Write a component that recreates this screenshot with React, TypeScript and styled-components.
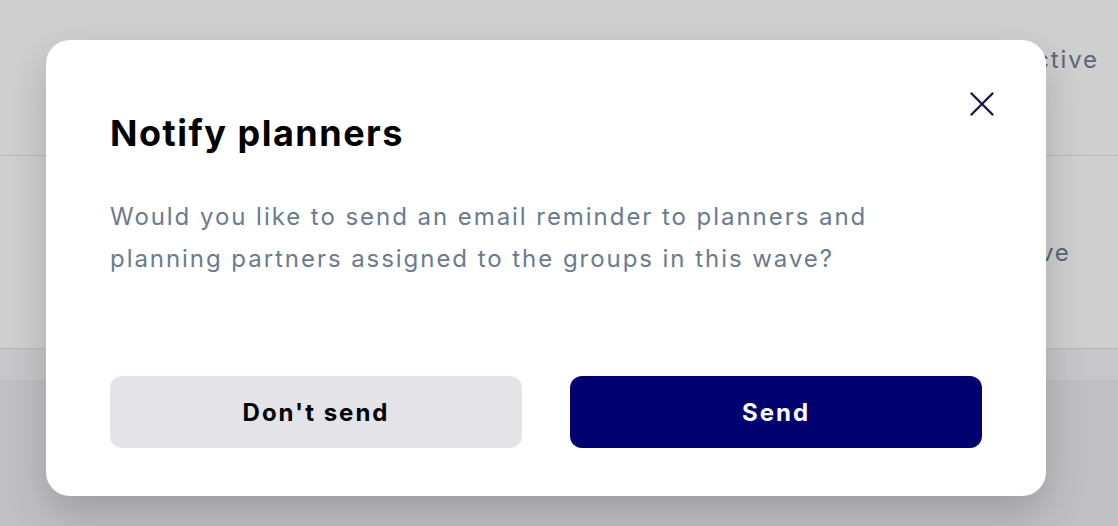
import React from "react";
import styled, { createGlobalStyle } from "styled-components";

const GlobalStyle = createGlobalStyle`
  html, body {
    margin: 0;
    padding: 0;
    width: 1118px;
    height: 526px;
    overflow: hidden;
    font-family: Inter, "Noto Sans", sans-serif;
  }
`;

const Page = styled.div`
  position: relative;
  width: 1118px;
  height: 526px;
  background: #edecf2;
`;

const Table = styled.div`
  display: flex;
  flex-direction: column;
  background: #ffffff;
`;

interface RowProps {
  $height: number;
  $bg?: string;
}

const Row = styled.div<RowProps>`
  display: flex;
  align-items: center;
  height: ${(p) => p.$height}px;
  padding-left: 1017px;
  border-bottom: 1px solid #e2e8f0;
  background: ${(p) => p.$bg || "#ffffff"};
  box-sizing: border-box;
`;

const Cell = styled.span<{ $offset?: number }>`
  font-size: 24px;
  letter-spacing: 1.8px;
  color: #718096;
  margin-top: ${(p) => p.$offset || 0}px;
`;

const Overlay = styled.div`
  position: absolute;
  inset: 0;
  background: rgba(0, 0, 0, 0.19);
  padding: 40px 0 0 46px;
  box-sizing: border-box;
`;

const Dialog = styled.div`
  position: relative;
  width: 1000px;
  box-sizing: border-box;
  padding: 71px 64px 48px;
  background: #ffffff;
  border-radius: 24px;
  box-shadow: 0 18px 40px rgba(0, 0, 0, 0.18);
`;

const CloseButton = styled.button`
  position: absolute;
  top: 52px;
  right: 52px;
  width: 24px;
  height: 24px;
  padding: 0;
  border: none;
  background: none;
  cursor: pointer;
  display: flex;
`;

const Title = styled.h2`
  margin: 0;
  font-size: 36px;
  line-height: 44px;
  font-weight: 700;
  letter-spacing: 1.5px;
  color: #000000;
`;

const Message = styled.p`
  margin: 41px 0 0;
  max-width: 775px;
  font-size: 24px;
  line-height: 42px;
  letter-spacing: 1.95px;
  color: #6b7a8f;
`;

const Actions = styled.div`
  display: grid;
  grid-template-columns: 1fr 1fr;
  gap: 48px;
  margin-top: 96px;
`;

const ActionButton = styled.button<{ $primary?: boolean }>`
  height: 72px;
  border: none;
  border-radius: 12px;
  font-family: Inter, "Noto Sans", sans-serif;
  font-size: 24px;
  font-weight: 700;
  letter-spacing: 2px;
  cursor: pointer;
  background: ${(p) => (p.$primary ? "#000070" : "#e3e3e8")};
  color: ${(p) => (p.$primary ? "#ffffff" : "#000000")};
`;

export default function App() {
  return (
    <>
      <GlobalStyle />
      <Page>
        <Table>
          <Row $height={156}>
            <Cell $offset={-36}>Active</Cell>
          </Row>
          <Row $height={193}>
            <Cell>Live</Cell>
          </Row>
          <Row $height={32} $bg="#f5f6f8" />
        </Table>
        <Overlay>
          <Dialog role="dialog" aria-labelledby="notify-title">
            <CloseButton aria-label="Close">
              <svg width="24" height="24" viewBox="0 0 24 24" fill="none">
                <path
                  d="M1.5 1.5 L22.5 22.5 M22.5 1.5 L1.5 22.5"
                  stroke="#1b1744"
                  strokeWidth="2.4"
                  strokeLinecap="round"
                />
              </svg>
            </CloseButton>
            <Title id="notify-title">Notify planners</Title>
            <Message>
              Would you like to send an email reminder to planners and planning
              partners assigned to the groups in this wave?
            </Message>
            <Actions>
              <ActionButton>Don't send</ActionButton>
              <ActionButton $primary>Send</ActionButton>
            </Actions>
          </Dialog>
        </Overlay>
      </Page>
    </>
  );
}
